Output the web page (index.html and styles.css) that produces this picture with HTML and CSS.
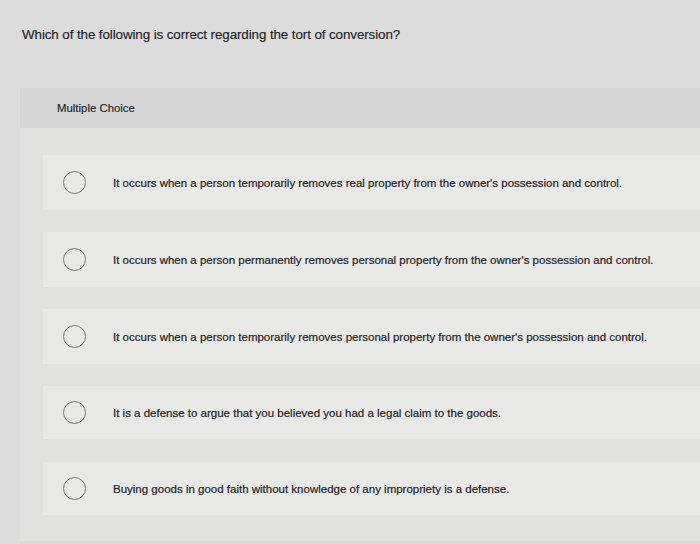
FILE: index.html
```html
<!DOCTYPE html>
<html>
<head>
<meta charset="utf-8">
<link rel="stylesheet" href="styles.css">
</head>
<body>
<div class="page">
  <p class="question">Which of the following is correct regarding the tort of conversion?</p>
  <div class="panel">
    <div class="panel-head">Multiple Choice</div>
    <div class="options">
      <div class="option"><span class="radio"></span><span class="label">It occurs when a person temporarily removes real property from the owner's possession and control.</span></div>
      <div class="option"><span class="radio"></span><span class="label">It occurs when a person permanently removes personal property from the owner's possession and control.</span></div>
      <div class="option"><span class="radio"></span><span class="label">It occurs when a person temporarily removes personal property from the owner's possession and control.</span></div>
      <div class="option"><span class="radio"></span><span class="label">It is a defense to argue that you believed you had a legal claim to the goods.</span></div>
      <div class="option"><span class="radio"></span><span class="label">Buying goods in good faith without knowledge of any impropriety is a defense.</span></div>
    </div>
  </div>
</div>
</body>
</html>
```

FILE: styles.css
```css
html, body {
  margin: 0;
  padding: 0;
  width: 700px;
  height: 544px;
  overflow: hidden;
  background: #dcdcdd;
  font-family: "Liberation Sans", Arial, sans-serif;
  color: #232325;
}
.page {
  padding-top: 27px;
}
.question {
  margin: 0 0 0 22px;
  font-size: 13.4px;
  line-height: 16px;
  letter-spacing: -0.1px;
  -webkit-text-stroke: 0.15px #232325;
}
.panel {
  margin-top: 45px;
  margin-left: 20px;
  background: #e1e1e0;
  padding-bottom: 26px;
}
.panel-head {
  height: 40px;
  display: flex;
  align-items: center;
  padding-left: 37px;
  background: #d5d5d6;
  font-size: 11.4px;
  -webkit-text-stroke: 0.15px #232325;
}
.options {
  display: flex;
  flex-direction: column;
  gap: 22px;
  padding-top: 27px;
  padding-left: 23px;
}
.option {
  height: 55px;
  display: flex;
  align-items: center;
  background: #e8e8e6;
}
.option:nth-child(4) {
  height: 53px;
}
.option:nth-child(5) {
  height: 53px;
  margin-top: 1px;
}
.radio {
  box-sizing: border-box;
  width: 23px;
  height: 23px;
  border: 1.5px solid #7a7a7e;
  border-radius: 50%;
  margin-left: 20px;
  flex: none;
}
.label {
  margin-left: 27px;
  font-size: 11.5px;
  white-space: nowrap;
  -webkit-text-stroke: 0.2px #232325;
}
```
